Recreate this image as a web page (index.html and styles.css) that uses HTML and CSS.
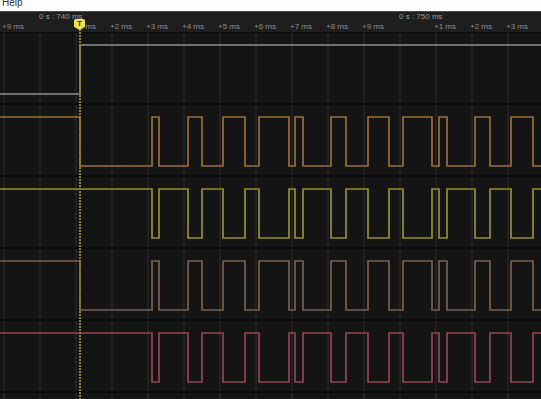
FILE: index.html
```html
<!DOCTYPE html>
<html>
<head>
<meta charset="utf-8">
<title>Logic capture</title>
<link rel="stylesheet" href="styles.css">
</head>
<body>

<div class="menubar"><span>Help</span></div>

<div class="view">

<div class="ruler">
    <div class="ruler-row major">
        <span></span>
        <span class="stamp">0 s : 740 ms</span>
        <span></span><span></span><span></span><span></span><span></span><span></span><span></span><span></span><span></span>
        <span class="stamp">0 s : 750 ms</span>
        <span></span><span></span><span></span>
    </div>
    <div class="ruler-row minor">
        <span>+9 ms</span>
        <span></span>
        <span>+1 ms</span>
        <span>+2 ms</span>
        <span>+3 ms</span>
        <span>+4 ms</span>
        <span>+5 ms</span>
        <span>+6 ms</span>
        <span>+7 ms</span>
        <span>+8 ms</span>
        <span>+9 ms</span>
        <span></span>
        <span>+1 ms</span>
        <span>+2 ms</span>
        <span>+3 ms</span>
    </div>
</div>

<div class="traces">
    <div class="channel"><svg viewBox="0 0 541 70" width="541" height="70">
        <polyline class="ch0" points="0,61 80,61 80,12 545,12"/>
    </svg></div>
    <div class="channel"><svg viewBox="0 0 541 70" width="541" height="70">
        <polyline class="ch1" points="0,12 80,12 80,61 152,61 152,12 159,12 159,61 188,61 188,12 202,12 202,61 223,61 223,12 245,12 245,61 259,61 259,12 289,12 289,61 295,61 295,12 303,12 303,61 331,61 331,12 346,12 346,61 368,61 368,12 389,12 389,61 403,61 403,12 432,12 432,61 439,61 439,12 447,12 447,61 475,61 475,12 490,12 490,61 511,61 511,12 533,12 533,61 545,61"/>
    </svg></div>
    <div class="channel"><svg viewBox="0 0 541 70" width="541" height="70">
        <polyline class="ch2" points="0,12 152,12 152,61 159,61 159,12 188,12 188,61 202,61 202,12 223,12 223,61 245,61 245,12 259,12 259,61 289,61 289,12 295,12 295,61 303,61 303,12 331,12 331,61 346,61 346,12 368,12 368,61 389,61 389,12 403,12 403,61 432,61 432,12 439,12 439,61 447,61 447,12 475,12 475,61 490,61 490,12 511,12 511,61 533,61 533,12 545,12"/>
    </svg></div>
    <div class="channel"><svg viewBox="0 0 541 70" width="541" height="70">
        <polyline class="ch3" points="0,12 80,12 80,61 152,61 152,12 159,12 159,61 188,61 188,12 202,12 202,61 223,61 223,12 245,12 245,61 259,61 259,12 289,12 289,61 295,61 295,12 303,12 303,61 331,61 331,12 346,12 346,61 368,61 368,12 389,12 389,61 403,61 403,12 432,12 432,61 439,61 439,12 447,12 447,61 475,61 475,12 490,12 490,61 511,61 511,12 533,12 533,61 545,61"/>
    </svg></div>
    <div class="channel"><svg viewBox="0 0 541 70" width="541" height="70">
        <polyline class="ch4" points="0,12 152,12 152,61 159,61 159,12 188,12 188,61 202,61 202,12 223,12 223,61 245,61 245,12 259,12 259,61 289,61 289,12 295,12 295,61 303,61 303,12 331,12 331,61 346,61 346,12 368,12 368,61 389,61 389,12 403,12 403,61 432,61 432,12 439,12 439,61 447,61 447,12 475,12 475,61 490,61 490,12 511,12 511,61 533,61 533,12 545,12"/>
    </svg></div>
    <div class="channel tail"></div>
</div>

<div class="trigger-line"></div>
<div class="trigger-flag">T</div>

</div>

</body>
</html>
```

FILE: styles.css
```css
body {
    margin: 0;
    width: 541px;
    height: 399px;
    overflow: hidden;
    background: #141414;
    font-family: "Liberation Sans", Arial, sans-serif;
}

.menubar {
    height: 11px;
    background: #fdfdfd;
    overflow: hidden;
    padding-left: 2px;
    font-size: 10px;
    line-height: 6px;
    color: #333;
}

.view {
    position: relative;
    height: 388px;
    overflow: hidden;
}

.ruler {
    background: #1e1e1f;
    border-top: 1px solid #4e4e4e;
    border-bottom: 1px solid #0c0c0c;
    padding: 0 0 1px 2px;
}

.ruler-row {
    display: grid;
    grid-template-columns: repeat(15, 36px);
    font-size: 8px;
    line-height: 9.5px;
    height: 9.5px;
    white-space: nowrap;
    color: #8e8e8e;
}

.ruler-row.major .stamp {
    margin-left: 1px;
    color: #999;
}

.traces {
    background-color: #141414;
    background-image: repeating-linear-gradient(90deg, transparent 0 3px, #212121 3px 5px, transparent 5px 36px);
}

.channel {
    height: 72px;
    box-sizing: border-box;
    border-bottom: 2px solid #0b0b0b;
}

.channel.tail {
    height: 6px;
    border-bottom: 0;
}

.channel svg {
    display: block;
}

.channel polyline {
    fill: none;
    stroke-width: 1.7;
    stroke-linejoin: miter;
}

.ch0 { stroke: #8f8f8f; }
.ch1 { stroke: #9a6e38; }
.ch2 { stroke: #978f2d; }
.ch3 { stroke: #7a604f; }
.ch4 { stroke: #984254; }

/* trigger marker sits over ruler and traces */
.trigger-line {
    position: absolute;
    left: 79px;
    top: 18px;
    bottom: 0;
    width: 2px;
    background: repeating-linear-gradient(180deg, #8a8337 0 2px, transparent 2px 3px);
}

.trigger-flag {
    position: absolute;
    left: 74px;
    top: 8px;
    width: 11px;
    height: 11px;
    background: #efe34c;
    border-radius: 2px 2px 0 0;
    clip-path: polygon(0 0, 100% 0, 100% 70%, 50% 100%, 0 70%);
    color: #2a2a1a;
    font-size: 8px;
    font-weight: bold;
    line-height: 9px;
    text-align: center;
}
```
